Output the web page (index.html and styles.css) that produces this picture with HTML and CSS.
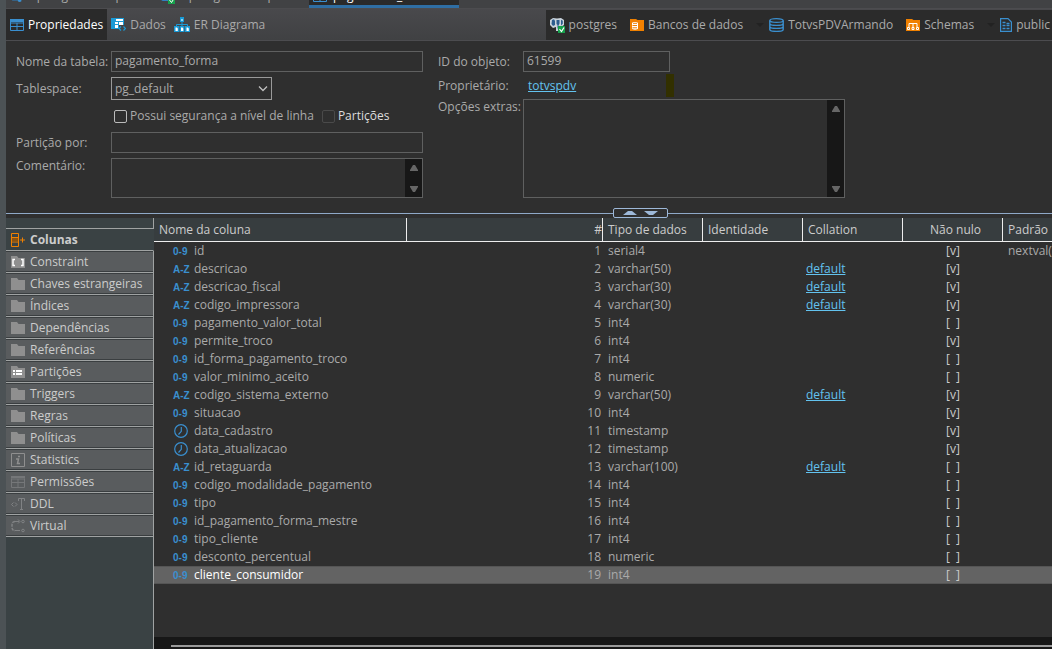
FILE: index.html
```html
<!DOCTYPE html>
<html lang="pt-BR">
<head>
  <meta charset="UTF-8">
  <meta name="viewport" content="width=device-width, initial-scale=1.0">
  <title>pagamento_forma</title>
  <link rel="stylesheet" href="styles.css">
</head>
<body>
  <!-- shared icons -->
  <svg class="defs" width="0" height="0">
    <symbol id="folder" viewBox="0 0 14 12"><path d="M0 0h6l1.500 2H14v10H0z" fill="#8f8f8f"/></symbol>
    <symbol id="clock" viewBox="0 0 14 14"><circle cx="7" cy="7" r="6.300" fill="none" stroke="#3a8fcf" stroke-width="1.200"/><path d="M7.300 3v4.300L4.500 10.500" fill="none" stroke="#3a8fcf" stroke-width="1.200"/></symbol>
    <symbol id="script" viewBox="0 0 16 16"><path d="M1 2h10v11H3c-1 0-2-1-2-2z" fill="#2f7fc0"/><path d="M9 10h4v4c-1 1-3 1-4 0z" fill="#3a8fcf"/></symbol>
    <symbol id="table" viewBox="0 0 14 12"><path d="M.5.5h13v11H.5zM.5 4h13M.5 7.500h13M7 4v7.500" fill="none" stroke="#3a8fcf"/><path d="M0 0h14v3H0z" fill="#3a8fcf"/></symbol>
    <symbol id="up" viewBox="0 0 8 6"><path d="M3 0h2l3 5v1H0V5z" fill="#666"/></symbol>
    <symbol id="down" viewBox="0 0 8 6"><path d="M3 6h2l3-5V0H0v1z" fill="#666"/></symbol>
    <symbol id="caret" viewBox="0 0 8 4"><path d="M0 0h8L4 4z" fill="#222"/></symbol>
  </svg>

  <div class="window">
    <div class="editor-tabs">
      <div class="editor-tab"><svg width="14" height="16"><use href="#script"/></svg>&lt;postgres&gt; Script</div>
      <div class="editor-tab">
        <svg width="16" height="16"><use href="#script"/><path d="M8 9h7v7H8z" fill="#16a04c"/><path d="M9.500 12l2 2.500 2.500-4" fill="none" stroke="#fff"/></svg>&lt;postgres&gt; Script
      </div>
      <div class="editor-tab active">
        <svg width="14" height="12"><use href="#table"/></svg>pagamento_forma
        <svg class="close" width="9" height="9"><path d="M1 1l7 7M8 1L1 8" stroke="#fff" fill="none"/></svg>
      </div>
    </div>

    <div class="toolbar">
      <nav class="page-tabs">
        <button class="page-tab active"><svg width="14" height="12"><use href="#table"/></svg>Propriedades</button>
        <button class="page-tab">
          <svg width="15" height="14" viewBox="0 0 15 14"><path d="M0 0h13v11H0z" fill="#1a9ad6"/><path d="M4 4h3v2H4zM4 7h3v3H4zM8 4h4v3H8zM5 1h7v2H5z" fill="#fff"/><path d="M8 7h7v7H8z" fill="#434446"/><path d="M10 8.500L8 10.500l2 2M12.500 8.500l2 2-2 2" fill="none" stroke="#1a9ad6" stroke-width="1.200"/></svg>Dados
        </button>
        <button class="page-tab">
          <svg width="16" height="15" viewBox="0 0 16 15"><path d="M6 0h4v5H6z" fill="#1a9ad6"/><path d="M7 2h2v2H7z" fill="#8ed4f2"/><path d="M8 5v4M2.500 9.500V7.500h11v2" fill="none" stroke="#1a9ad6"/><path d="M0 9h5v6H0zM5.500 9h5v6h-5zM11 9h5v6h-5z" fill="#1a9ad6"/><path d="M1.500 10.500H3l.8 1V14H1.500zM7 10.500h1.500l.8 1V14H7zM12.500 10.500H14l.8 1V14h-2.300z" fill="#fff"/></svg>ER Diagrama
        </button>
      </nav>
      <nav class="path">
        <a class="crumb" href="#">
          <svg width="15" height="15" viewBox="0 0 15 15"><path d="M0 2l3-2 4 .5L11 0l3 2v5l-3 2v4H6V9L3 10 0 7z" fill="#c9d3dc"/><path d="M2 2l2-.8L5 3v4L3 8 1.500 6zM6.500 2h3v3.500l-1 2v3H7.500V7l-1-1zM11 1.800l1.800 1v3L11 7.500z" fill="#2c5d8f"/><path d="M8 8h7v7H8z" fill="#16a04c"/><path d="M9.500 11l2 2.500 2.500-4" fill="none" stroke="#fff" stroke-width="1.200"/></svg>postgres
        </a>
        <a class="crumb" href="#">
          <svg width="14" height="12" viewBox="0 0 14 12"><path d="M0 0h6l1.500 1H14v11H0z" fill="#f08000"/><path d="M2 4c0-1.500 6-1.500 6 0v5.500c0 1.500-6 1.500-6 0z" fill="#fff"/><path d="M3 4.300h4M2.500 6.500H7M2.500 8.800H7" stroke="#f08000"/></svg>Bancos de dados
        </a>
        <svg class="caret" width="8" height="4"><use href="#caret"/></svg>
        <a class="crumb" href="#">
          <svg width="15" height="14" viewBox="0 0 15 14"><path d="M.8 2.500v9c0 2.500 13.400 2.500 13.400 0v-9M.8 5.500c0 2.500 13.400 2.500 13.400 0M.8 8.500c0 2.500 13.400 2.500 13.400 0" fill="none" stroke="#3a8fcf" stroke-width="1.400"/><ellipse cx="7.500" cy="2.500" rx="6.700" ry="1.900" fill="none" stroke="#3a8fcf" stroke-width="1.200"/></svg>TotvsPDVArmando
        </a>
        <a class="crumb" href="#">
          <svg width="14" height="12" viewBox="0 0 14 12"><path d="M0 0h6l1.500 1H14v11H0z" fill="#f08000"/><path d="M3 8V4.500h8V8M7 4.500V8" fill="none" stroke="#fff"/><path d="M1.500 8.500h2v2h-2zM6 8.500h2v2H6zM10.500 8.500h2v2h-2z" fill="none" stroke="#fff"/></svg>Schemas
        </a>
        <svg class="caret" width="8" height="4"><use href="#caret"/></svg>
        <a class="crumb" href="#">
          <svg width="12" height="14" viewBox="0 0 12 14"><path d="M.6.600h7.400l3.400 3.400v9.400H.6z" fill="none" stroke="#3a8fcf" stroke-width="1.200"/><path d="M2.500 4.500h3M2.500 7.500h3M2.500 10.500h3M6.500 5.500h3M6.500 7.500h3M6.500 10.500h3" stroke="#3a8fcf" stroke-width="1.400"/></svg>public
        </a>
      </nav>
    </div>

    <form class="props">
      <div class="props-left">
        <label for="name">Nome da tabela:</label>
        <input id="name" class="field" type="text" value="pagamento_forma">
        <label for="tablespace">Tablespace:</label>
        <div class="select">
          <select id="tablespace"><option>pg_default</option></select>
          <svg width="10" height="6"><path d="M1 .5l4 4 4-4" fill="none" stroke="#c0c0c0" stroke-width="1.300"/></svg>
        </div>
        <div class="checks">
          <label><input type="checkbox">Possui segurança a nível de linha</label>
          <label class="bright"><input type="checkbox" disabled>Partições</label>
        </div>
        <label for="part">Partição por:</label>
        <input id="part" class="field" type="text">
        <label for="comment" class="top">Comentário:</label>
        <div class="area">
          <textarea id="comment"></textarea>
          <div class="scroll"><svg width="8" height="6"><use href="#up"/></svg><svg width="8" height="6"><use href="#down"/></svg></div>
        </div>
      </div>
      <div class="props-right">
        <label for="oid">ID do objeto:</label>
        <input id="oid" class="field short" type="text" value="61599">
        <span>Proprietário:</span>
        <div class="owner"><a href="#">totvspdv</a><span class="marker"></span></div>
        <label for="extra" class="top">Opções extras:</label>
        <div class="area">
          <textarea id="extra"></textarea>
          <div class="scroll"><svg width="8" height="6"><use href="#up"/></svg><svg width="8" height="6"><use href="#down"/></svg></div>
        </div>
      </div>
    </form>

    <div class="splitter">
      <div class="handle">
        <svg width="14" height="4"><path d="M0 4L5 0h4l5 4z" fill="#9db8d8"/></svg>
        <svg width="14" height="4"><path d="M0 0h14L9 4H5z" fill="#9db8d8"/></svg>
      </div>
    </div>

    <div class="details">
      <nav class="side">
        <button class="side-tab active"><svg width="14" height="14"><path d="M.5.500h7v13h-7z" fill="none" stroke="#f08000"/><path d="M.5 4.500h7M.5 9h7" stroke="#f08000"/><path d="M1 5h6v3.500H1z" fill="#8a5210"/><path d="M9 7h5M11.500 4.500v5" stroke="#f08000"/></svg>Colunas</button>
        <button class="side-tab"><svg width="14" height="12"><use href="#folder"/><path d="M4 3.500H2v6h2M10 3.500h2v6h-2" fill="none" stroke="#fff" stroke-width="1.500"/></svg>Constraint</button>
        <button class="side-tab"><svg width="14" height="12"><use href="#folder"/></svg>Chaves estrangeiras</button>
        <button class="side-tab"><svg width="14" height="12"><use href="#folder"/></svg>Índices</button>
        <button class="side-tab"><svg width="14" height="12"><use href="#folder"/></svg>Dependências</button>
        <button class="side-tab"><svg width="14" height="12"><use href="#folder"/></svg>Referências</button>
        <button class="side-tab"><svg width="14" height="12"><use href="#folder"/><path d="M2 5h2M5 5h6M2 8h2M5 8h6" stroke="#fff" stroke-width="2"/></svg>Partições</button>
        <button class="side-tab"><svg width="14" height="12"><use href="#folder"/></svg>Triggers</button>
        <button class="side-tab"><svg width="14" height="12"><use href="#folder"/></svg>Regras</button>
        <button class="side-tab"><svg width="14" height="12"><use href="#folder"/></svg>Políticas</button>
        <button class="side-tab"><svg width="14" height="14"><path d="M.5.500h13v13H.5z" fill="none" stroke="#8f8f8f"/><path d="M5 6h2.500L6.500 10.500H9M7 3.500h2" fill="none" stroke="#8f8f8f" stroke-width="1.500"/></svg>Statistics</button>
        <button class="side-tab"><svg width="14" height="12"><path d="M0 0h14v3H0zM.5 3v8.500h13V3M7 3v8M0 6.500h14" fill="none" stroke="#757779"/><path d="M0 0h14v2H0z" fill="#757779"/></svg>Permissões</button>
        <button class="side-tab"><svg width="14" height="12"><path d="M2.500 4.500L.5 6.500l2 2M4 4.500l2 2-2 2M7.500 3V.500h6V3M10.500.500v11M9 11.500h3" fill="none" stroke="#808284"/></svg>DDL</button>
        <button class="side-tab"><svg width="14" height="14"><path d="M4 2.500h4M7 .5l2 2-2 2M4 11.500h5" fill="none" stroke="#808284"/><path d="M4 2.500C1 2.500 1 5 1 7s0 4.500 3 4.500" fill="none" stroke="#808284" stroke-width="1.500" stroke-dasharray="3 1"/><circle cx="12" cy="2.500" r="1.300" fill="none" stroke="#808284"/><circle cx="12" cy="11.500" r="1.300" fill="none" stroke="#808284"/></svg>Virtual</button>
      </nav>

      <div class="grid">
        <table>
          <colgroup><col class="c-name"><col class="c-num"><col class="c-mid"><col class="c-mid"><col class="c-mid"><col class="c-mid"><col></colgroup>
          <thead>
            <tr><th>Nome da coluna</th><th class="num">#</th><th>Tipo de dados</th><th>Identidade</th><th>Collation</th><th class="nn">Não nulo</th><th>Padrão</th></tr>
          </thead>
          <tbody>
            <tr><td><i>0-9</i>id</td><td class="num">1</td><td>serial4</td><td></td><td></td><td class="nn">[v]</td><td>nextval('</td></tr>
            <tr><td><i>A-Z</i>descricao</td><td class="num">2</td><td>varchar(50)</td><td></td><td><a href="#">default</a></td><td class="nn">[v]</td><td></td></tr>
            <tr><td><i>A-Z</i>descricao_fiscal</td><td class="num">3</td><td>varchar(30)</td><td></td><td><a href="#">default</a></td><td class="nn">[v]</td><td></td></tr>
            <tr><td><i>A-Z</i>codigo_impressora</td><td class="num">4</td><td>varchar(30)</td><td></td><td><a href="#">default</a></td><td class="nn">[v]</td><td></td></tr>
            <tr><td><i>0-9</i>pagamento_valor_total</td><td class="num">5</td><td>int4</td><td></td><td></td><td class="nn">[&nbsp; ]</td><td></td></tr>
            <tr><td><i>0-9</i>permite_troco</td><td class="num">6</td><td>int4</td><td></td><td></td><td class="nn">[v]</td><td></td></tr>
            <tr><td><i>0-9</i>id_forma_pagamento_troco</td><td class="num">7</td><td>int4</td><td></td><td></td><td class="nn">[&nbsp; ]</td><td></td></tr>
            <tr><td><i>0-9</i>valor_minimo_aceito</td><td class="num">8</td><td>numeric</td><td></td><td></td><td class="nn">[&nbsp; ]</td><td></td></tr>
            <tr><td><i>A-Z</i>codigo_sistema_externo</td><td class="num">9</td><td>varchar(50)</td><td></td><td><a href="#">default</a></td><td class="nn">[v]</td><td></td></tr>
            <tr><td><i>0-9</i>situacao</td><td class="num">10</td><td>int4</td><td></td><td></td><td class="nn">[v]</td><td></td></tr>
            <tr><td><svg width="14" height="14"><use href="#clock"/></svg>data_cadastro</td><td class="num">11</td><td>timestamp</td><td></td><td></td><td class="nn">[v]</td><td></td></tr>
            <tr><td><svg width="14" height="14"><use href="#clock"/></svg>data_atualizacao</td><td class="num">12</td><td>timestamp</td><td></td><td></td><td class="nn">[v]</td><td></td></tr>
            <tr><td><i>A-Z</i>id_retaguarda</td><td class="num">13</td><td>varchar(100)</td><td></td><td><a href="#">default</a></td><td class="nn">[&nbsp; ]</td><td></td></tr>
            <tr><td><i>0-9</i>codigo_modalidade_pagamento</td><td class="num">14</td><td>int4</td><td></td><td></td><td class="nn">[&nbsp; ]</td><td></td></tr>
            <tr><td><i>0-9</i>tipo</td><td class="num">15</td><td>int4</td><td></td><td></td><td class="nn">[&nbsp; ]</td><td></td></tr>
            <tr><td><i>0-9</i>id_pagamento_forma_mestre</td><td class="num">16</td><td>int4</td><td></td><td></td><td class="nn">[&nbsp; ]</td><td></td></tr>
            <tr><td><i>0-9</i>tipo_cliente</td><td class="num">17</td><td>int4</td><td></td><td></td><td class="nn">[&nbsp; ]</td><td></td></tr>
            <tr><td><i>0-9</i>desconto_percentual</td><td class="num">18</td><td>numeric</td><td></td><td></td><td class="nn">[&nbsp; ]</td><td></td></tr>
            <tr class="selected"><td><i>0-9</i>cliente_consumidor</td><td class="num">19</td><td>int4</td><td></td><td></td><td class="nn">[&nbsp; ]</td><td></td></tr>
          </tbody>
        </table>
        <div class="hscroll"><div class="thumb"></div></div>
      </div>
    </div>
  </div>
</body>
</html>
```

FILE: styles.css
```css
:root {
  --bg: #2f2f2f;
  --text: #aaaaaa;
  --light: #cccccc;
  --line: #5f6060;
  --panel: #3a4244;
  --link: #63c3ef;
  --blue: #3a8fcf;
}

* {
  box-sizing: border-box;
}

body {
  margin: 0;
  height: 100vh;
  overflow: hidden;
  background: var(--bg);
  color: var(--text);
  font: 12px/16px "Open Sans", "Noto Sans", sans-serif;
}

button, input, select, textarea {
  font: inherit;
  color: inherit;
}

svg {
  flex: none;
}

a {
  color: var(--link);
}

.defs {
  position: absolute;
}

.window {
  display: flex;
  flex-direction: column;
  height: 100vh;
  border-left: 6px solid #4c5255;
}

/* editor tabs, only the lower edge is in view */
.editor-tabs {
  display: flex;
  align-items: flex-end;
  height: 8px;
  flex: none;
  overflow: hidden;
  background: #414244;
}

.editor-tab {
  display: flex;
  align-items: center;
  gap: 6px;
  flex: none;
  width: 150px;
  height: 28px;
  padding: 4px 4px 0;
  white-space: nowrap;
}

.editor-tab.active {
  margin-left: 3px;
  background: #2a2a2a;
  border-bottom: 3px solid #2f6ea3;
  padding-top: 7px;
  color: #fff;
}

.editor-tab .close {
  margin-left: auto;
}

.toolbar {
  display: flex;
  justify-content: space-between;
  flex: none;
  height: 33px;
  background: linear-gradient(#49494c, #404143);
  border-top: 1px solid #4c4c4f;
  border-bottom: 1px solid #4c4c4f;
}

.page-tabs, .path {
  display: flex;
}

.page-tab {
  display: flex;
  align-items: center;
  gap: 4px;
  border: 0;
  background: none;
  padding: 0 4px;
}

.page-tab.active {
  background: #2a2a2a;
  color: #fff;
}

.path {
  align-items: center;
  gap: 13px;
  margin-top: 1px;
  padding: 0 2px 0 4px;
  background: #2b2b2b;
}

.crumb {
  display: flex;
  align-items: center;
  gap: 4px;
  color: var(--text);
  text-decoration: none;
}

.path .caret {
  margin-right: -8px;
}

.props {
  display: flex;
  gap: 15px;
  flex: none;
  padding: 10px;
}

.props-left, .props-right {
  display: grid;
  align-items: center;
}

.props-left {
  grid-template-columns: 95px 312px;
  grid-template-rows: 21px 23px 22px 21px 40px;
  row-gap: 5px;
}

.props-right {
  grid-template-columns: 85px 322px;
  grid-template-rows: 21px 23px 99px;
  row-gap: 2px;
}

.props .top {
  align-self: start;
}

.field {
  width: 100%;
  height: 21px;
  padding: 0 3px 3px;
  border: 1px solid var(--line);
  background: none;
}

.short {
  width: 147px;
}

.select {
  display: flex;
  align-items: center;
  width: 161px;
  height: 23px;
  padding-right: 3px;
  border: 1px solid #9a9a9a;
}

.select select {
  flex: 1;
  appearance: none;
  border: 0;
  padding: 0 3px;
  background: none;
}

.checks {
  grid-column: 2;
  display: flex;
  gap: 8px;
  padding-left: 3px;
  white-space: nowrap;
}

.checks label {
  display: flex;
  align-items: center;
  gap: 3px;
}

.checks input {
  appearance: none;
  width: 13px;
  height: 13px;
  margin: 0;
  border: 1px solid #bbb;
  border-radius: 2px;
}

.checks input:disabled {
  border-color: #4a4a4a;
}

.bright {
  color: #ddd;
}

.area {
  display: flex;
  height: 100%;
  border: 1px solid var(--line);
}

.area textarea {
  flex: 1;
  min-width: 0;
  resize: none;
  border: 0;
  background: none;
  padding: 2px 3px;
}

.scroll {
  display: flex;
  flex-direction: column;
  justify-content: space-between;
  align-items: center;
  width: 17px;
  padding: 6px 0 5px;
  background: #171717;
}

.owner {
  display: flex;
  align-items: center;
  width: 151px;
  height: 23px;
  padding-left: 5px;
}

.marker {
  width: 8px;
  height: 23px;
  margin-left: auto;
  background: #323000;
}

.splitter {
  display: flex;
  flex: none;
  height: 10px;
}

.splitter::before, .splitter::after {
  content: "";
  height: 1px;
  margin-top: 5px;
  background: #8fa9c8;
}

.splitter::before {
  flex: 0 0 58%;
}

.splitter::after {
  flex: 1;
}

.handle {
  display: flex;
  align-items: center;
  justify-content: center;
  gap: 7px;
  width: 55px;
  border: 1px solid #9db8d8;
  border-radius: 2px;
}

.details {
  display: flex;
  flex: 1;
  min-height: 0;
}

.side {
  display: flex;
  flex-direction: column;
  flex: none;
  width: 148px;
  background: var(--panel);
}

.side::before, .side::after {
  content: "";
  border-right: 1px solid #a0a3a3;
}

.side::before {
  height: 10px;
  border-bottom: 1px solid #a0a3a3;
}

.side::after {
  flex: 1;
}

.side-tab {
  display: flex;
  align-items: center;
  gap: 5px;
  height: 22px;
  padding: 0 5px;
  border: 0;
  border-right: 1px solid #a0a3a3;
  border-bottom: 1px solid #a0a3a3;
  background: #595c5e;
  box-shadow: inset 0 1px #3a3e40, inset 0 -1px #3a3e40;
  color: var(--light);
  white-space: nowrap;
}

.side-tab.active {
  border-right-color: var(--panel);
  background: var(--panel);
  box-shadow: none;
  font-weight: bold;
}

.grid {
  display: flex;
  flex-direction: column;
  justify-content: space-between;
  flex: 1;
  min-width: 0;
}

table {
  width: 100%;
  table-layout: fixed;
  border-collapse: separate;
  border-spacing: 0;
}

.c-name {
  width: 253px;
}

.c-num {
  width: 196px;
}

.c-mid {
  width: 100px;
}

th, td {
  padding: 0 5px;
  overflow: hidden;
  text-align: left;
  white-space: nowrap;
}

th {
  height: 24px;
  background: #373d3f;
  border-right: 1px solid #eee;
  border-bottom: 1px solid #eee;
  color: var(--light);
  font-weight: normal;
}

th:last-child {
  border-right: 0;
}

td {
  height: 18px;
  line-height: 18px;
}

td:last-child {
  padding-right: 0;
}

td:first-child {
  padding-left: 19px;
}

td i {
  display: inline-block;
  width: 15px;
  margin-right: 6px;
  color: var(--blue);
  font: bold 10px/16px "Liberation Sans", sans-serif;
  white-space: nowrap;
}

td svg {
  margin-left: 1px;
  margin-right: 6px;
  vertical-align: -3px;
}

td a {
  margin-left: -2px;
}

.num {
  text-align: right;
  padding-right: 2px;
}

th.num {
  padding-right: 0;
}

.nn {
  text-align: center;
  color: var(--light);
}

th.nn {
  padding-left: 11px;
}

.selected td {
  background: #636363;
  box-shadow: inset 0 1px #555, inset 0 -1px #555;
}

.selected td:first-child {
  color: #fff;
}

.hscroll {
  height: 12px;
  padding: 8px 0 0 17px;
  background: #171717;
}

.thumb {
  height: 2px;
  background: #9a9a9a;
}
```
